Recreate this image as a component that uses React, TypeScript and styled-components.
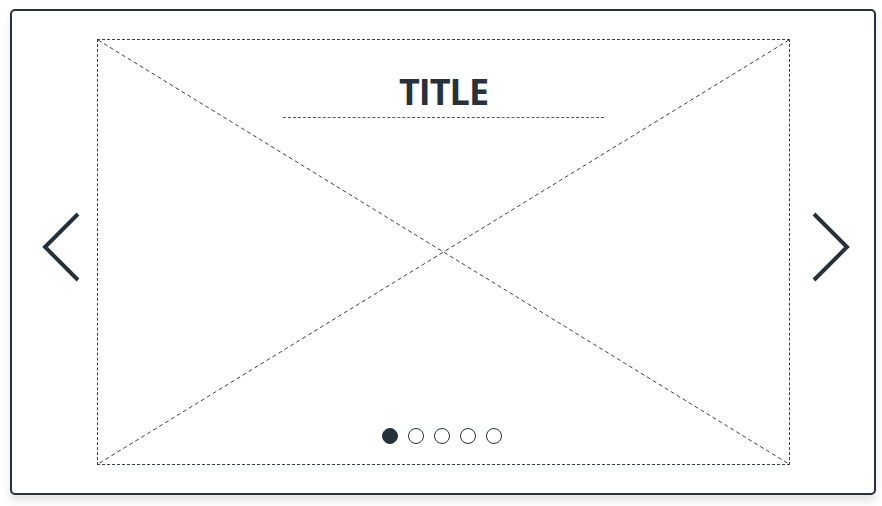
import React from "react";
import styled, { createGlobalStyle } from "styled-components";

const ink = "#27313c";

const GlobalStyle = createGlobalStyle`
  html, body {
    margin: 0;
    padding: 0;
    background: #ffffff;
  }
  body {
    font-family: "Open Sans", "Liberation Sans", sans-serif;
  }
`;

const Page = styled.div`
  width: 882px;
  height: 506px;
  box-sizing: border-box;
  padding: 9px 6px 11px 10px;
`;

const Card = styled.div`
  box-sizing: border-box;
  width: 100%;
  height: 100%;
  display: flex;
  align-items: stretch;
  border: 2px solid ${ink};
  border-radius: 5px;
  background: #fff;
  box-shadow: 0 6px 8px rgba(0, 0, 0, 0.11);
  padding: 28px 0;
`;

const ArrowSide = styled.div<{ $side: "left" | "right" }>`
  width: ${(p) => (p.$side === "left" ? "85px" : "84px")};
  display: flex;
  align-items: center;
  justify-content: ${(p) => (p.$side === "left" ? "flex-start" : "flex-end")};
  padding: ${(p) => (p.$side === "left" ? "0 0 11px 29px" : "0 23px 11px 0")};
  box-sizing: border-box;
  svg {
    display: block;
  }
`;

const Slide = styled.div`
  position: relative;
  flex: 1;
  display: flex;
  flex-direction: column;
  align-items: center;
  justify-content: space-between;
  border: 1px dashed #3a3f45;
`;

const Cross = styled.svg`
  position: absolute;
  inset: 0;
  width: 100%;
  height: 100%;
`;

const TitleBlock = styled.div`
  position: relative;
  display: flex;
  flex-direction: column;
  align-items: center;
  padding-top: 32px;
`;

const Title = styled.h1`
  margin: 0;
  font-family: "Open Sans", "Liberation Sans", sans-serif;
  font-weight: 700;
  font-size: 36px;
  line-height: 40px;
  letter-spacing: -1px;
  color: ${ink};
`;

const TitleRule = styled.div`
  width: 321px;
  margin-top: 5px;
  border-top: 1px dashed #555a60;
`;

const Dots = styled.div`
  position: relative;
  display: flex;
  gap: 10px;
  padding-bottom: 20px;
  margin-right: 3px;
`;

const Dot = styled.span<{ $active?: boolean }>`
  box-sizing: border-box;
  width: 16px;
  height: 16px;
  border-radius: 50%;
  border: 1.5px solid ${ink};
  background: ${(p) => (p.$active ? ink : "#fff")};
`;

const Chevron = ({ dir }: { dir: "left" | "right" }) => (
  <svg width="40" height="72" viewBox="0 0 40 72">
    <polyline
      points={dir === "left" ? "37,3 4,36 37,69" : "3,3 36,36 3,69"}
      fill="none"
      stroke={ink}
      strokeWidth="4"
    />
  </svg>
);

export default function App() {
  const slides = [0, 1, 2, 3, 4];
  return (
    <>
      <GlobalStyle />
      <Page>
        <Card>
          <ArrowSide $side="left">
            <Chevron dir="left" />
          </ArrowSide>
          <Slide>
            <Cross preserveAspectRatio="none" viewBox="0 0 100 100">
              <line x1="0" y1="0" x2="100" y2="100" stroke="#3a3f45" strokeWidth="1" strokeDasharray="4 3" vectorEffect="non-scaling-stroke" />
              <line x1="100" y1="0" x2="0" y2="100" stroke="#3a3f45" strokeWidth="1" strokeDasharray="4 3" vectorEffect="non-scaling-stroke" />
            </Cross>
            <TitleBlock>
              <Title>TITLE</Title>
              <TitleRule />
            </TitleBlock>
            <Dots>
              {slides.map((i) => (
                <Dot key={i} $active={i === 0} />
              ))}
            </Dots>
          </Slide>
          <ArrowSide $side="right">
            <Chevron dir="right" />
          </ArrowSide>
        </Card>
      </Page>
    </>
  );
}
